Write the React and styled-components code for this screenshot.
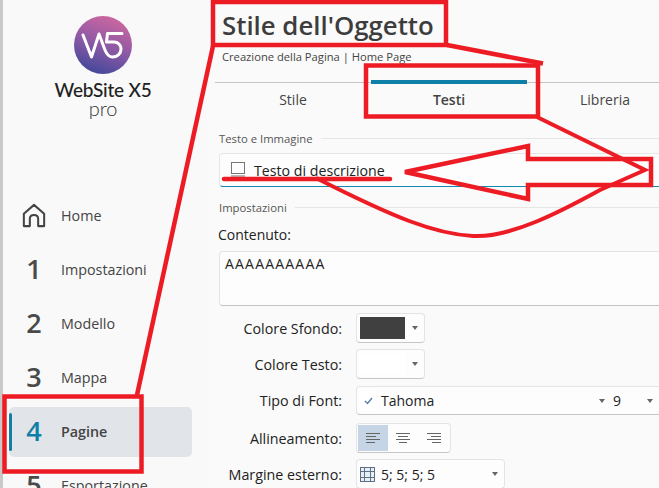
import styled, { createGlobalStyle } from "styled-components";

const GlobalStyle = createGlobalStyle`
  html, body {
    margin: 0;
    padding: 0;
    background: #fafafa;
  }
  * {
    box-sizing: border-box;
  }
`;

const uiFont = `"Open Sans", "Noto Sans", sans-serif`;

const navItems = [
  { id: "home", label: "Home" },
  { id: "1", label: "Impostazioni" },
  { id: "2", label: "Modello" },
  { id: "3", label: "Mappa" },
  { id: "4", label: "Pagine", active: true },
  { id: "5", label: "Esportazione" },
];

const HomeIcon = () => (
  <svg width="24" height="25" viewBox="0 0 26 26" fill="none" stroke="#444" strokeWidth="2.2" strokeLinejoin="round">
    <path d="M2 11 L13 1.5 L24 11 V24.5 H17.5 V16.5 Q17.5 12.5 13 12.5 Q8.5 12.5 8.5 16.5 V24.5 H2 Z" />
  </svg>
);

const Logo = () => (
  <LogoBox>
    <svg width="58" height="58" viewBox="74 16 58 58">
      <defs>
        <linearGradient id="logoGrad" x1="0.7" y1="0" x2="0.35" y2="1">
          <stop offset="0" stopColor="#d0679f" />
          <stop offset="0.5" stopColor="#8f5aa5" />
          <stop offset="1" stopColor="#42489a" />
        </linearGradient>
      </defs>
      <circle cx="103" cy="45" r="29" fill="url(#logoGrad)" />
      <path
        d="M83 35 L91.5 57 L99 34 L105 50 C107 55 109 57 112.5 57 C118 57 121 53 121 49 C121 45 118 42 114 42 L106.5 42 L107.5 33.5 L122 33.5"
        fill="none"
        stroke="#fff"
        strokeWidth="3"
        strokeLinecap="round"
        strokeLinejoin="round"
      />
    </svg>
    <LogoName>WebSite X5</LogoName>
    <LogoPro>pro</LogoPro>
  </LogoBox>
);

const Annotations = () => (
  <Overlay viewBox="0 0 659 488">
    <g fill="none" stroke="#ed1c24" strokeWidth="4.5" strokeLinejoin="miter">
      <rect x="213" y="2" width="233" height="43" />
      <path d="M213 46 L137 395" />
      <rect x="4.5" y="396.5" width="137" height="75" />
      <path d="M447 45 L543 63.5" />
      <rect x="366" y="65.5" width="172" height="51" />
      <path d="M537 117 L645 170 L600 190 C560 212 510 238 473 236 C435 234 395 218 316 178" strokeWidth="4" />
      <path d="M405 172 L528 146 V159 H651 V185 H528 V199 Z" strokeWidth="4.5" />
      <path d="M224 179 H390" strokeWidth="4.5" strokeLinecap="round" />
    </g>
  </Overlay>
);

const AlignIcon = ({ kind }) => {
  const spans = {
    left: [[0, 14], [0, 10], [0, 14], [0, 9]],
    center: [[0, 14], [2, 12], [0, 14], [3, 11]],
    right: [[0, 14], [4, 14], [0, 14], [5, 14]],
  }[kind];
  return (
    <svg width="14" height="10" viewBox="0 0 14 10" stroke="#666" strokeWidth="1">
      {spans.map(([a, b], i) => (
        <line key={i} x1={a} x2={b} y1={i * 3 + 0.5} y2={i * 3 + 0.5} />
      ))}
    </svg>
  );
};

export default function App() {
  return (
    <>
      <GlobalStyle />
      <Page>
        <Sidebar>
          <Logo />
          <NavList>
            {navItems.map((item) => (
              <NavRow key={item.id}>
                <NavItem $active={item.active}>
                  <NavMark>{item.id === "home" ? <HomeIcon /> : <NavNumber $active={item.active}>{item.id}</NavNumber>}</NavMark>
                  <NavLabel $active={item.active}>{item.label}</NavLabel>
                </NavItem>
              </NavRow>
            ))}
          </NavList>
        </Sidebar>
        <Main>
          <Title>Stile dell'Oggetto</Title>
          <Breadcrumb>Creazione della Pagina | Home Page</Breadcrumb>
          <Tabs>
            <Tab>Stile</Tab>
            <Tab $active>Testi</Tab>
            <Tab>Libreria</Tab>
          </Tabs>
          <SectionLabel $top={11}>Testo e Immagine</SectionLabel>
          <ItemBox>
            <svg width="16" height="16" viewBox="0 0 16 16" fill="none" stroke="#777">
              <rect x="1.5" y="0.5" width="13" height="11" fill="#fdfdfd" />
              <line x1="1" x2="15" y1="14" y2="14" />
            </svg>
            <span>Testo di descrizione</span>
          </ItemBox>
          <SectionLabel $top={12}>Impostazioni</SectionLabel>
          <FieldTitle>Contenuto:</FieldTitle>
          <TextBox>AAAAAAAAAA</TextBox>
          <Row $top={7}>
            <RowLabel>Colore Sfondo:</RowLabel>
            <Control $w={69} $h={30}>
              <Swatch $color="#404040" />
              <Caret />
            </Control>
          </Row>
          <Row $top={6}>
            <RowLabel>Colore Testo:</RowLabel>
            <Control $w={69} $h={30}>
              <Swatch $color="#ffffff" />
              <Caret />
            </Control>
          </Row>
          <Row $top={7}>
            <RowLabel>Tipo di Font:</RowLabel>
            <Control $w={320} $h={29}>
              <FontCheck>
                <svg width="9" height="8" viewBox="0 0 9 8" fill="none" stroke="#5b82ad" strokeWidth="1.5">
                  <path d="M1 4 L3.5 6.5 L8 1" />
                </svg>
              </FontCheck>
              <FontName>Tahoma</FontName>
              <Caret />
              <FontSize>9</FontSize>
              <Caret />
            </Control>
          </Row>
          <Row $top={8}>
            <RowLabel>Allineamento:</RowLabel>
            <AlignGroup>
              <AlignCell $active><AlignIcon kind="left" /></AlignCell>
              <AlignCell><AlignIcon kind="center" /></AlignCell>
              <AlignCell><AlignIcon kind="right" /></AlignCell>
            </AlignGroup>
          </Row>
          <Row $top={6}>
            <RowLabel>Margine esterno:</RowLabel>
            <Control $w={149} $h={30}>
              <svg width="15" height="15" viewBox="0 0 15 15" fill="#e8eef4" stroke="#5a7188">
                <rect x="0.5" y="0.5" width="14" height="14" />
                <path d="M4.5 0.5 V14.5 M10.5 0.5 V14.5 M0.5 4.5 H14.5 M0.5 10.5 H14.5" fill="none" />
              </svg>
              <MarginValue>5; 5; 5; 5</MarginValue>
              <Caret />
            </Control>
          </Row>
        </Main>
        <Annotations />
      </Page>
    </>
  );
}

const Page = styled.div`
  position: relative;
  display: flex;
  width: 659px;
  height: 488px;
  overflow: hidden;
  background: #fafafa;
  font-family: ${uiFont};
  color: #222;
`;

const Sidebar = styled.aside`
  flex: none;
  width: 207px;
  border-left: 3px solid #c9c9c9;
  background: #f9f9f9;
`;

const LogoBox = styled.div`
  display: flex;
  flex-direction: column;
  align-items: center;
  width: 200px;
  height: 189px;
  padding-top: 16px;
`;

const LogoName = styled.div`
  margin-top: 6px;
  font-family: Lato, sans-serif;
  font-size: 19px;
  line-height: 20px;
  font-weight: 500;
  letter-spacing: -0.2px;
  color: #222;
  white-space: nowrap;
`;

const LogoPro = styled.div`
  font-family: Lato, sans-serif;
  font-size: 20px;
  line-height: 16px;
  font-weight: 300;
  color: #333;
`;

const NavList = styled.nav`
  display: flex;
  flex-direction: column;
`;

const NavRow = styled.div`
  height: 54px;
  padding: 2px 0 2px 6px;
  flex: none;
`;

const NavItem = styled.div`
  position: relative;
  display: flex;
  align-items: center;
  width: 183px;
  height: 50px;
  padding-bottom: 2px;
  border-radius: 5px;
  background: ${(p) => (p.$active ? "#e1e5e9" : "transparent")};

  &::before {
    content: "";
    display: ${(p) => (p.$active ? "block" : "none")};
    position: absolute;
    left: 0;
    top: 6px;
    width: 3px;
    height: 38px;
    border-radius: 2px;
    background: #0f7fa8;
  }
`;

const NavMark = styled.div`
  display: flex;
  justify-content: center;
  width: 50px;
`;

const NavNumber = styled.span`
  font-size: 27px;
  line-height: 30px;
  font-weight: 600;
  color: ${(p) => (p.$active ? "#0f7fa8" : "#4a4a4a")};
`;

const NavLabel = styled.span`
  margin-left: 2px;
  font-size: 14.3px;
  font-weight: ${(p) => (p.$active ? 600 : 400)};
  color: #444;
`;

const Main = styled.main`
  flex: 1;
  min-width: 0;
  padding-left: 8px;
  overflow: hidden;
`;

const Title = styled.h1`
  margin: 0;
  padding: 7px 0 0 7px;
  height: 47px;
  font-size: 25.8px;
  line-height: 36px;
  font-weight: 600;
  color: #3d3d3d;
  white-space: nowrap;
`;

const Breadcrumb = styled.div`
  height: 35px;
  padding: 3px 0 0 7px;
  font-size: 11.2px;
  line-height: 14px;
  color: #444;
  white-space: nowrap;
`;

const Tabs = styled.div`
  display: grid;
  grid-template-columns: repeat(3, 156px);
  width: 640px;
  height: 37px;
  border-top: 1px solid #c4c4c4;
`;

const Tab = styled.div`
  margin-top: -3px;
  padding-top: 6px;
  height: 40px;
  border-top: 4px solid ${(p) => (p.$active ? "#0f7fa8" : "transparent")};
  text-align: center;
  font-size: 14px;
  line-height: 20px;
  font-weight: ${(p) => (p.$active ? 600 : 400)};
  color: #444;
`;

const SectionLabel = styled.div`
  display: flex;
  align-items: center;
  gap: 8px;
  height: 16px;
  margin-top: ${(p) => p.$top}px;
  padding-left: 4px;
  font-size: 11.3px;
  color: #555;
  white-space: nowrap;

  &::after {
    content: "";
    flex: 1;
    height: 1px;
    background: #e6e6e6;
  }
`;

const ItemBox = styled.div`
  display: flex;
  align-items: center;
  gap: 8px;
  width: 480px;
  height: 34px;
  margin: 7px 0 0 4px;
  padding: 0 0 0 10px;
  border: 1px solid #e6e6e6;
  border-bottom: 1px solid #1288b0;
  border-radius: 4px;
  background: #fdfdfd;
  font-size: 14.2px;
  color: #222;
`;

const FieldTitle = styled.div`
  height: 20px;
  margin-top: 10px;
  padding-left: 3px;
  font-size: 14px;
  line-height: 20px;
  color: #222;
`;

const TextBox = styled.div`
  width: 480px;
  height: 55px;
  margin: 6px 0 0 4px;
  padding: 2px 5px;
  border: 1px solid #e4e4e4;
  border-bottom-color: #c2c2c2;
  border-radius: 4px;
  background: #fdfdfd;
  font-size: 14px;
  line-height: 20px;
  letter-spacing: 1.2px;
  color: #222;
`;

const Row = styled.div`
  display: flex;
  align-items: center;
  gap: 14px;
  margin-top: ${(p) => p.$top}px;
`;

const RowLabel = styled.div`
  flex: none;
  width: 127px;
  text-align: right;
  font-size: 14.3px;
  color: #222;
  white-space: nowrap;
`;

const Control = styled.div`
  flex: none;
  display: flex;
  align-items: center;
  width: ${(p) => p.$w}px;
  height: ${(p) => p.$h}px;
  padding: 0 6px 0 3px;
  border: 1px solid #e4e4e4;
  border-bottom-color: #c6c6c6;
  border-radius: 4px;
  background: #fdfdfd;
  font-size: 14px;
  color: #222;
`;

const Swatch = styled.div`
  width: 45px;
  height: 22px;
  margin-right: auto;
  background: ${(p) => p.$color};
`;

const Caret = styled.span`
  flex: none;
  width: 0;
  height: 0;
  border-left: 3.5px solid transparent;
  border-right: 3.5px solid transparent;
  border-top: 4px solid #666;
`;

const FontCheck = styled.div`
  display: flex;
  align-items: center;
  justify-content: center;
  width: 16px;
  height: 20px;
  background: #ffffff;
`;

const FontName = styled.span`
  margin-left: 5px;
  width: 218px;
`;

const FontSize = styled.span`
  margin-left: 8px;
  width: 34px;
`;

const MarginValue = styled.span`
  margin-left: 6px;
  margin-right: auto;
`;

const AlignGroup = styled.div`
  flex: none;
  display: flex;
  width: 95px;
  height: 30px;
  padding: 1px;
  border: 1px solid #e4e4e4;
  border-bottom-color: #c6c6c6;
  border-radius: 4px;
  background: #fdfdfd;
`;

const AlignCell = styled.div`
  display: flex;
  align-items: center;
  justify-content: center;
  width: 31px;
  background: ${(p) => (p.$active ? "#c5d5e6" : "transparent")};
`;

const Overlay = styled.svg`
  position: absolute;
  left: 0;
  top: 0;
  width: 659px;
  height: 488px;
  pointer-events: none;
`;
